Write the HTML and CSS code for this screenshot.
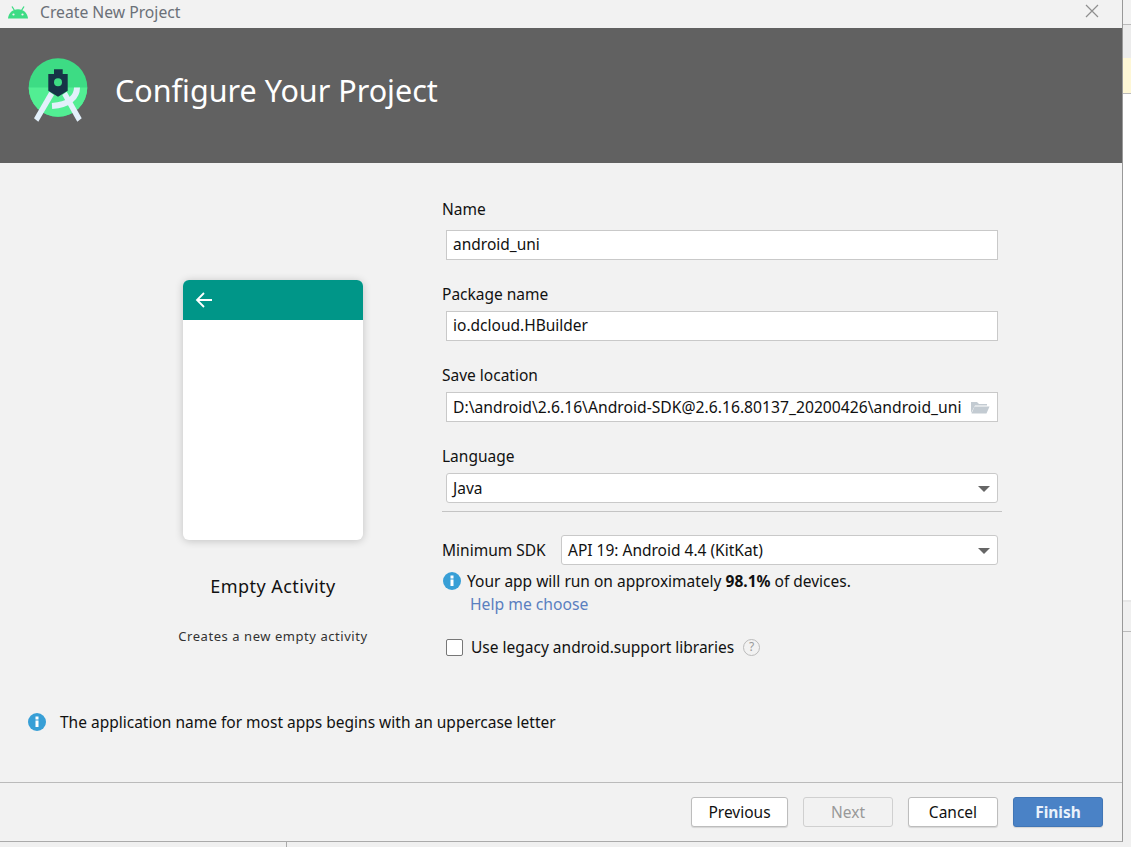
FILE: index.html
```html
<!DOCTYPE html>
<html>
<head>
    <title>Create New Project</title>
    <link rel="stylesheet" href="styles.css">
</head>
<body>
    <div class="backdrop">
        <div class="dialog">
            <div class="titlebar">
                <svg class="android-head" width="20" height="13" viewBox="0 0 20 13">
                    <path d="M0 12.500 C0.500 7 4.500 3.200 10 3.200 C15.500 3.200 19.500 7 20 12.500 Z" fill="#3ddc84"/>
                    <path d="M4 0.500 L6.500 4.500 M16 0.500 L13.500 4.500" stroke="#3ddc84" stroke-width="1.300"/>
                    <circle cx="5.500" cy="8.500" r="1.100" fill="#f2f2f2"/>
                    <circle cx="14.500" cy="8.500" r="1.100" fill="#f2f2f2"/>
                </svg>
                <span class="titlebar-text">Create New Project</span>
                <svg class="close" width="14" height="14" viewBox="0 0 14 14">
                    <path d="M1 1 L13 13 M13 1 L1 13" stroke="#8f8f8f" stroke-width="1.200" fill="none"/>
                </svg>
            </div>

            <header class="banner">
                <svg class="studio-logo" width="60" height="66" viewBox="0 0 60 66">
                    <circle cx="30" cy="29.500" r="29.300" fill="#3ddc84"/>
                    <path d="M0.700 29.500 H59.300 A29.300 29.300 0 0 1 0.700 29.500 Z" fill="#52ee93"/>
                    <path d="M21.300 33.700 L26 37 L10.300 63.700 L6 60.300 Z" fill="#e3f0fb"/>
                    <path d="M34.300 37 L38.700 33.700 L53.700 60.300 L49.300 63.700 Z" fill="#e3f0fb"/>
                    <path d="M49 29.500 C49 38 42 47 24 48" stroke="#e3f0fb" stroke-width="6" fill="none"/>
                    <path d="M26 11.300 H34.700 V16 H39.700 V32.700 L30 38.700 L20.300 32.700 V16 H26 Z" fill="#163447"/>
                    <circle cx="30" cy="24.300" r="4" fill="#3ddc84"/>
                </svg>
                <h1 class="banner-title">Configure Your Project</h1>
            </header>

            <main class="content">
                <section class="preview">
                    <div class="phone">
                        <div class="phone-bar">
                            <svg width="18" height="16" viewBox="0 0 18 16">
                                <path d="M17 8 H2 M9 1 L2 8 L9 15" stroke="#fff" stroke-width="1.800" fill="none"/>
                            </svg>
                        </div>
                    </div>
                    <div class="preview-name">Empty Activity</div>
                    <div class="preview-desc">Creates a new empty activity</div>
                </section>

                <section class="form">
                    <label class="field-label">Name</label>
                    <div class="input">android_uni</div>

                    <label class="field-label">Package name</label>
                    <div class="input">io.dcloud.HBuilder</div>

                    <label class="field-label">Save location</label>
                    <div class="input input-folder">
                        <span class="input-text">D:\android\2.6.16\Android-SDK@2.6.16.80137_20200426\android_uni</span>
                        <svg width="20" height="14" viewBox="0 0 20 14">
                            <path d="M1 13 V2 H7 L9 4 H17 V5.500 H5 Z" fill="#c3cbd2"/>
                            <path d="M4.500 6.500 H19.500 L16.500 13.500 H1.500 Z" fill="#c3cbd2"/>
                        </svg>
                    </div>

                    <label class="field-label">Language</label>
                    <div class="select">Java<span class="caret"></span></div>
                    <hr class="rule">

                    <div class="sdk-row">
                        <label class="sdk-label">Minimum SDK</label>
                        <div class="select sdk-select">API 19: Android 4.4 (KitKat)<span class="caret"></span></div>
                    </div>
                    <div class="info-row">
                        <svg class="info-icon" width="18" height="18" viewBox="0 0 18 18">
                            <circle cx="9" cy="9" r="9" fill="#389fd6"/>
                            <rect x="7.500" y="7.500" width="3" height="6.500" fill="#fff"/>
                            <rect x="7.500" y="3.500" width="3" height="3" fill="#fff"/>
                        </svg>
                        <span>Your app will run on approximately <b>98.1%</b> of devices.</span>
                    </div>
                    <a class="help-link">Help me choose</a>
                    <div class="check-row">
                        <span class="checkbox"></span>
                        <span>Use legacy android.support libraries</span>
                        <span class="help-circle">?</span>
                    </div>
                </section>
            </main>

            <div class="validation">
                <svg class="info-icon" width="18" height="18" viewBox="0 0 18 18">
                    <circle cx="9" cy="9" r="9" fill="#389fd6"/>
                    <rect x="7.500" y="7.500" width="3" height="6.500" fill="#fff"/>
                    <rect x="7.500" y="3.500" width="3" height="3" fill="#fff"/>
                </svg>
                <span>The application name for most apps begins with an uppercase letter</span>
            </div>

            <footer class="actions">
                <button class="btn btn-previous">Previous</button>
                <button class="btn btn-disabled">Next</button>
                <button class="btn">Cancel</button>
                <button class="btn btn-primary">Finish</button>
            </footer>
        </div>
        <span class="split-tick"></span>
    </div>
</body>
</html>
```

FILE: styles.css
```css
html,
body {
    margin: 0;
    padding: 0;
    height: 847px;
    overflow: hidden;
    font-family: "Noto Sans", "Open Sans", sans-serif;
    font-size: 15.5px;
    color: #111;
    background: #f2f2f2;
}
.backdrop {
    position: relative;
    height: 847px;
    background: linear-gradient(#f2f2f2 0, #f2f2f2 24px, #bbb 24px, #bbb 25px, #ececec 25px, #ececec 58px, #fef7d6 58px, #fef7d6 93px, #bbb 93px, #bbb 94px, #fff 94px, #fff 600px, #e6e6e6 600px, #e6e6e6 602px, #f0f0f0 602px, #f0f0f0 631px, #bbb 631px, #bbb 632px, #f0f0f0 632px);
}
.split-tick {
    position: absolute;
    left: 286px;
    top: 842px;
    width: 1px;
    height: 5px;
    background: #aaa;
}
.dialog {
    width: 1122px;
    height: 841px;
    background: #f2f2f2;
    border-right: 1px solid #999;
    border-bottom: 1px solid #aaa;
    display: flex;
    flex-direction: column;
}
.titlebar {
    height: 28px;
    display: flex;
    align-items: center;
    padding: 0 23px 4px 8px;
    box-sizing: border-box;
}
.titlebar-text {
    margin-left: 12px;
    color: #6b7078;
    font-size: 15.700px;
    flex: 1;
}
.close {
    margin-bottom: 2px;
}
.banner {
    height: 135px;
    background: #616161;
    display: flex;
    align-items: flex-start;
    padding: 30px 0 0 28px;
    box-sizing: border-box;
}
.banner-title {
    margin: 11px 0 0 27px;
    font-weight: 400;
    font-size: 30.500px;
    line-height: 42px;
    color: #fff;
}
.content {
    display: flex;
    height: 520px;
}
.preview {
    width: 442px;
    padding: 117px 0 0 183px;
    box-sizing: border-box;
}
.phone {
    width: 180px;
    height: 260px;
    background: #fff;
    border-radius: 6px;
    box-shadow: 0 1px 8px rgba(0, 0, 0, 0.2);
    overflow: hidden;
}
.phone-bar {
    height: 40px;
    background: #009688;
    display: flex;
    align-items: center;
    padding-left: 12px;
}
.preview-name {
    width: 180px;
    margin-top: 34px;
    text-align: center;
    font-size: 18px;
    letter-spacing: 0.450px;
    white-space: nowrap;
}
.preview-desc {
    width: 190px;
    margin: 29px 0 0 -5px;
    text-align: center;
    font-size: 13px;
    letter-spacing: 0.550px;
    white-space: nowrap;
    color: #333;
}
.form {
    width: 560px;
    padding-top: 36px;
}
.field-label {
    display: block;
    height: 20px;
    line-height: 20px;
    margin-bottom: 7px;
}
.field-label:first-child {
    margin-bottom: 11px;
}
.input,
.select {
    width: 552px;
    height: 30px;
    box-sizing: border-box;
    margin: 0 0 24px 4px;
    padding: 0 6px;
    line-height: 27px;
    background: #fff;
    border: 1px solid #c9c9c9;
    position: relative;
}
.input-folder {
    display: flex;
    align-items: center;
    justify-content: space-between;
    padding-right: 7px;
}
.input-text {
    font-size: 15.700px;
    white-space: nowrap;
}
.select {
    border-radius: 3px;
    margin-bottom: 8px;
    line-height: 29px;
}
.caret {
    position: absolute;
    right: 7px;
    top: 12px;
    border-left: 6px solid transparent;
    border-right: 6px solid transparent;
    border-top: 6px solid #666;
}
.rule {
    width: 560px;
    margin: 0 0 23px 0;
    border: 0;
    border-top: 1px solid #c4c4c4;
}
.sdk-row {
    display: flex;
    align-items: center;
}
.sdk-label {
    width: 119px;
    flex: none;
}
.sdk-select {
    width: 437px;
    margin: 0;
}
.info-row {
    display: flex;
    align-items: center;
    gap: 6px;
    height: 20px;
    margin-top: 6px;
    padding-left: 1px;
    white-space: nowrap;
}
.help-link {
    display: block;
    margin: 3px 0 0 28px;
    font-size: 15.700px;
    line-height: 20px;
    color: #5a7fc0;
}
.check-row {
    display: flex;
    align-items: center;
    margin: 23px 0 0 4px;
    height: 20px;
}
.checkbox {
    width: 17px;
    height: 17px;
    box-sizing: border-box;
    margin-right: 8px;
    background: #fff;
    border: 1px solid #777;
    border-radius: 2px;
}
.help-circle {
    width: 17px;
    height: 17px;
    box-sizing: border-box;
    margin-left: 9px;
    border: 1.500px solid #bbb;
    border-radius: 50%;
    color: #999;
    font-size: 12px;
    line-height: 14px;
    text-align: center;
}
.validation {
    height: 70px;
    display: flex;
    align-items: flex-start;
    gap: 14px;
    padding: 29px 0 0 28px;
    line-height: 20px;
    border-bottom: 1px solid #bbb;
}
.validation .info-icon {
    margin-top: 1px;
}
.actions {
    flex: 1;
    display: flex;
    justify-content: flex-end;
    gap: 15px;
    padding: 14px 19px 0 0;
}
.btn {
    height: 30px;
    width: 90px;
    box-sizing: border-box;
    font-family: inherit;
    font-size: 15.500px;
    color: #111;
    background: #fff;
    border: 1px solid #bdbdbd;
    border-radius: 3px;
    box-shadow: 0 1px 1px rgba(0, 0, 0, 0.12);
}
.btn-previous {
    width: 97px;
}
.btn-disabled {
    color: #999;
    background: #f2f2f2;
    border-color: #d0d0d0;
    box-shadow: none;
}
.btn-primary {
    color: #eaf2fb;
    font-weight: 700;
    background: #4a82c6;
    border-color: #4176b6;
}
```
